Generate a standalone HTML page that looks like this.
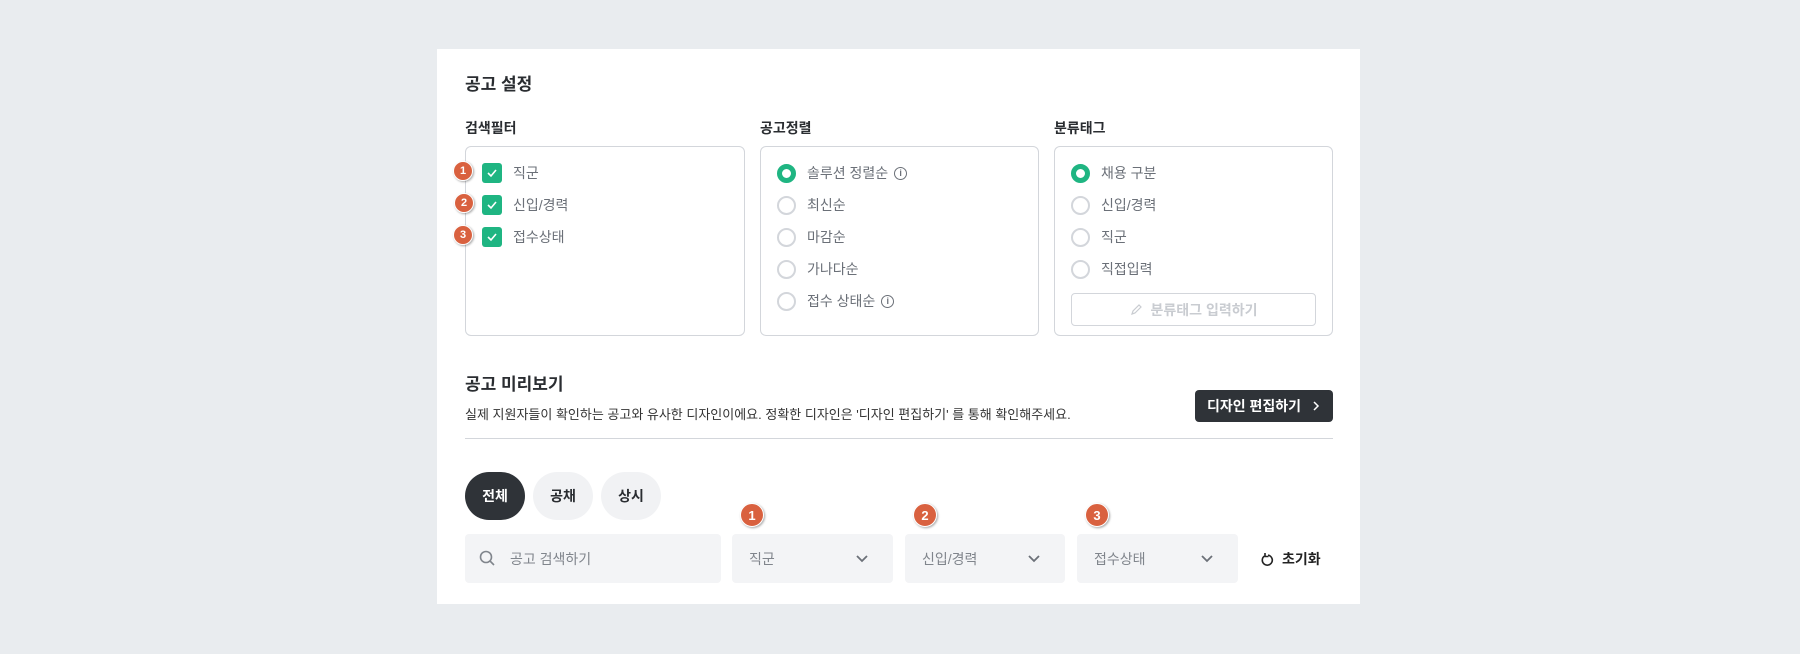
<!DOCTYPE html>
<html><head><meta charset="utf-8"><style>
*{box-sizing:border-box;margin:0;padding:0}
body{width:1800px;height:654px;background:#e9ecef;font-family:"Liberation Sans","Noto Sans CJK KR",sans-serif;position:relative;overflow:hidden;color:#222}
.card{position:absolute;left:437px;top:49px;width:923px;height:555px;background:#fff}
.a{position:absolute}
.h{font-weight:bold;font-size:17px;color:#2a2d31}
.lab{font-weight:bold;font-size:14px;color:#2a2d31}
.box{position:absolute;top:146px;height:190px;border:1px solid #d3d6db;border-radius:6px}
.it{position:absolute;font-size:14px;color:#6b7078;display:flex;align-items:center;height:20px}
.cb{width:20px;height:20px;background:#1fb582;border-radius:3px;display:flex;align-items:center;justify-content:center;margin-right:11px}
.rd{width:19px;height:19px;border:2px solid #d3d6db;border-radius:50%;margin-right:11px}
.rd.on{border:5px solid #1fb582}
.bd{position:absolute;width:20px;height:20px;border-radius:50%;background:#d9613f;color:#fff;font-size:11px;font-weight:bold;display:flex;align-items:center;justify-content:center;box-shadow:1px 1px 2px rgba(0,0,0,.35);border:1px solid #fff}
.bd.b{width:24px;height:24px;font-size:13px}
.info{display:inline-block;width:13px;height:13px;border:1.3px solid #6b7078;border-radius:50%;font-size:9px;text-align:center;line-height:11px;margin-left:6px;font-weight:bold}
.pill{position:absolute;top:472px;height:48px;border-radius:24px;background:#f1f2f4;font-size:14px;font-weight:bold;display:flex;align-items:center;justify-content:center;color:#2a2d31}
.fld{position:absolute;top:534px;height:49px;background:#f3f4f6;border-radius:4px;font-size:14px;color:#80858c;display:flex;align-items:center}
</style></head><body>
<div class="card"></div>
<div class="a h" style="left:465px;top:70px">공고 설정</div>
<div class="a lab" style="left:465px;top:118px">검색필터</div>
<div class="a lab" style="left:760px;top:118px">공고정렬</div>
<div class="a lab" style="left:1054px;top:118px">분류태그</div>
<div class="box" style="left:465px;width:280px"></div>
<div class="box" style="left:760px;width:279px"></div>
<div class="box" style="left:1054px;width:279px"></div>

<div class="it" style="left:482px;top:163px"><span class="cb"><svg width="12" height="10" viewBox="0 0 12 10"><path d="M2 5l3 3 5-6" stroke="#fff" stroke-width="1.6" fill="none"/></svg></span>직군</div>
<div class="it" style="left:482px;top:195px"><span class="cb"><svg width="12" height="10" viewBox="0 0 12 10"><path d="M2 5l3 3 5-6" stroke="#fff" stroke-width="1.6" fill="none"/></svg></span>신입/경력</div>
<div class="it" style="left:482px;top:227px"><span class="cb"><svg width="12" height="10" viewBox="0 0 12 10"><path d="M2 5l3 3 5-6" stroke="#fff" stroke-width="1.6" fill="none"/></svg></span>접수상태</div>
<div class="bd" style="left:453px;top:161px">1</div>
<div class="bd" style="left:454px;top:193px">2</div>
<div class="bd" style="left:453px;top:225px">3</div>

<div class="it" style="left:777px;top:163px"><span class="rd on"></span>솔루션 정렬순<span class="info">i</span></div>
<div class="it" style="left:777px;top:195px"><span class="rd"></span>최신순</div>
<div class="it" style="left:777px;top:227px"><span class="rd"></span>마감순</div>
<div class="it" style="left:777px;top:259px"><span class="rd"></span>가나다순</div>
<div class="it" style="left:777px;top:291px"><span class="rd"></span>접수 상태순<span class="info">i</span></div>

<div class="it" style="left:1071px;top:163px"><span class="rd on"></span>채용 구분</div>
<div class="it" style="left:1071px;top:195px"><span class="rd"></span>신입/경력</div>
<div class="it" style="left:1071px;top:227px"><span class="rd"></span>직군</div>
<div class="it" style="left:1071px;top:259px"><span class="rd"></span>직접입력</div>
<div class="a" style="left:1071px;top:293px;width:245px;height:33px;border:1px solid #d3d6db;border-radius:4px;display:flex;align-items:center;justify-content:center;font-size:14px;font-weight:bold;color:#c9ccd1"><svg width="13" height="13" viewBox="0 0 13 13" style="margin-right:8px"><path d="M2 11l1-3 6-6 2 2-6 6z" stroke="#c9ccd1" stroke-width="1.2" fill="none"/></svg>분류태그 입력하기</div>

<div class="a h" style="left:465px;top:370px">공고 미리보기</div>
<div class="a" style="left:465px;top:404px;font-size:13px;color:#333">실제 지원자들이 확인하는 공고와 유사한 디자인이에요. 정확한 디자인은 '디자인 편집하기' 를 통해 확인해주세요.</div>
<div class="a" style="left:1195px;top:390px;width:138px;height:32px;background:#2f3338;border-radius:4px;color:#fff;font-size:14px;font-weight:bold;display:flex;align-items:center;justify-content:center">디자인 편집하기<svg width="10" height="12" viewBox="0 0 10 12" style="margin-left:10px"><path d="M3 2l4 4-4 4" stroke="#fff" stroke-width="1.5" fill="none"/></svg></div>
<div class="a" style="left:465px;top:438px;width:868px;height:1px;background:#d3d6db"></div>

<div class="pill" style="left:465px;width:60px;background:#2f3338;color:#fff">전체</div>
<div class="pill" style="left:533px;width:60px">공채</div>
<div class="pill" style="left:601px;width:60px">상시</div>

<div class="bd b" style="left:740px;top:503px">1</div>
<div class="bd b" style="left:913px;top:503px">2</div>
<div class="bd b" style="left:1085px;top:503px">3</div>

<div class="fld" style="left:465px;width:256px;padding-left:14px"><svg width="17" height="17" viewBox="0 0 17 17" style="margin-right:14px"><circle cx="7" cy="7" r="5.5" stroke="#80858c" stroke-width="1.6" fill="none"/><path d="M11 11l4 4" stroke="#80858c" stroke-width="1.6"/></svg>공고 검색하기</div>
<div class="fld" style="left:732px;width:161px;padding-left:17px">직군<svg style="position:absolute;right:24px" width="14" height="9" viewBox="0 0 14 9"><path d="M2 2l5 5 5-5" stroke="#6b7078" stroke-width="1.8" fill="none"/></svg></div>
<div class="fld" style="left:905px;width:160px;padding-left:17px">신입/경력<svg style="position:absolute;right:24px" width="14" height="9" viewBox="0 0 14 9"><path d="M2 2l5 5 5-5" stroke="#6b7078" stroke-width="1.8" fill="none"/></svg></div>
<div class="fld" style="left:1077px;width:161px;padding-left:17px">접수상태<svg style="position:absolute;right:24px" width="14" height="9" viewBox="0 0 14 9"><path d="M2 2l5 5 5-5" stroke="#6b7078" stroke-width="1.8" fill="none"/></svg></div>
<div class="a" style="left:1260px;top:549px;font-size:14px;font-weight:bold;color:#222;display:flex;align-items:center"><svg width="14" height="15" viewBox="0 0 14 15" style="margin-right:8px"><path d="M4.5 4A5 5 0 1 0 8 3.2" stroke="#222" stroke-width="1.6" fill="none"/><path d="M5 1v3.5h3.5" stroke="#222" stroke-width="1.6" fill="none"/></svg>초기화</div>
</body></html>
